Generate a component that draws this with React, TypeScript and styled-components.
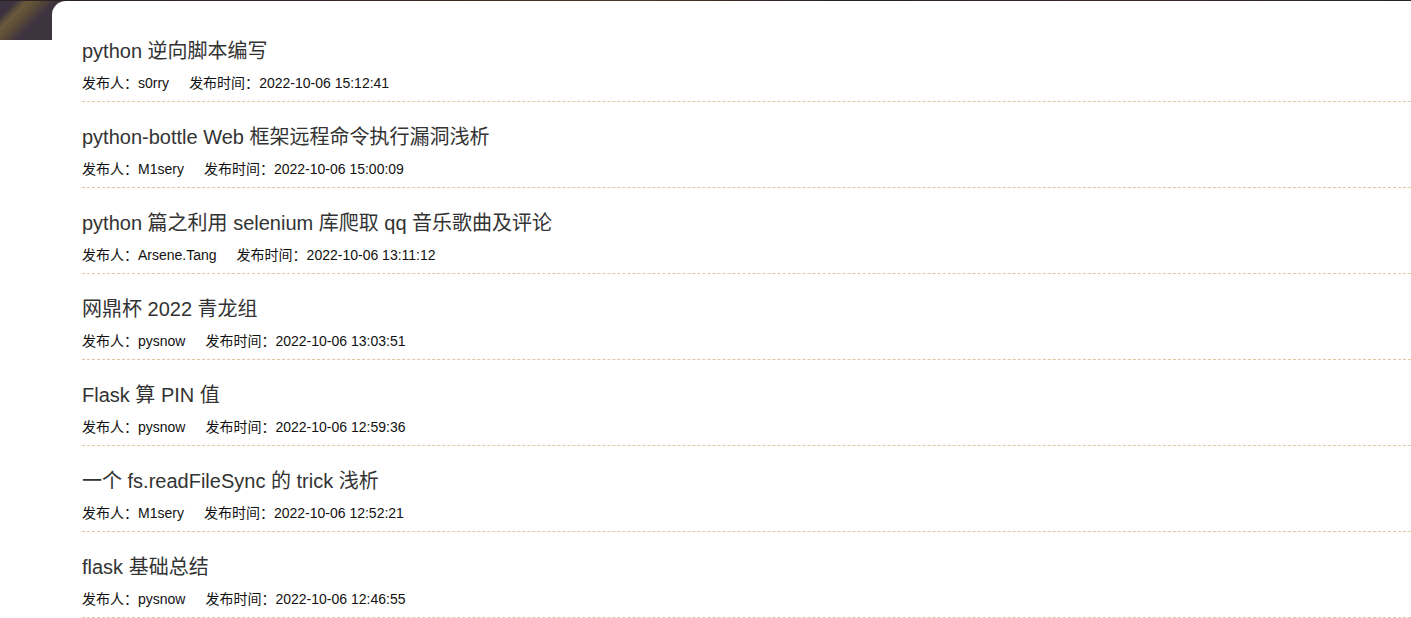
import styled, { createGlobalStyle } from "styled-components";

interface Post {
  title: string;
  author: string;
  time: string;
}

const posts: Post[] = [
  { title: "python 逆向脚本编写", author: "s0rry", time: "2022-10-06 15:12:41" },
  {
    title: "python-bottle Web 框架远程命令执行漏洞浅析",
    author: "M1sery",
    time: "2022-10-06 15:00:09",
  },
  {
    title: "python 篇之利用 selenium 库爬取 qq 音乐歌曲及评论",
    author: "Arsene.Tang",
    time: "2022-10-06 13:11:12",
  },
  { title: "网鼎杯 2022 青龙组", author: "pysnow", time: "2022-10-06 13:03:51" },
  { title: "Flask 算 PIN 值", author: "pysnow", time: "2022-10-06 12:59:36" },
  {
    title: "一个 fs.readFileSync 的 trick 浅析",
    author: "M1sery",
    time: "2022-10-06 12:52:21",
  },
  { title: "flask 基础总结", author: "pysnow", time: "2022-10-06 12:46:55" },
];

const GlobalStyle = createGlobalStyle`
  html, body {
    margin: 0;
    padding: 0;
    overflow: hidden;
  }
  body {
    font-family: "Liberation Sans", "Noto Sans CJK SC", sans-serif;
    background:
      linear-gradient(90deg, #2b2124 0%, #3a2a22 30%, #4a3826 45%, #2a2023 60%, #3b2b24 80%, #2a2226 100%) top / 100% 1px no-repeat,
      linear-gradient(135deg, #3b3240 0px, #3d3340 12px, #6b5a3a 20px, #5c4d35 28px, #3e3440 40px, #3a3140 100%) 0 0 / 100% 40px no-repeat,
      #fff;
  }
`;

const _Page = styled.div`
  padding: 1px 0 0 52px;
`;

const _Card = styled.div`
  background: #fff;
  border-top-left-radius: 14px;
  padding: 15px 0 0 30px;
`;

const _List = styled.ul`
  list-style: none;
  margin: 0;
  padding: 0;
`;

const _Item = styled.li`
  padding: 20px 0 8px;
  border-bottom: 1px dashed #e0c7a4;
`;

const _Title = styled.a`
  display: block;
  font-size: 20px;
  line-height: 30px;
  color: #333;
  text-decoration: none;
  margin-bottom: 7px;
`;

const _Meta = styled.div`
  display: flex;
  align-items: baseline;
  font-size: 14px;
  line-height: 20px;
  color: #111;
`;

const _Field = styled.span`
  margin-right: 20px;
`;

export default function App() {
  return (
    <>
      <GlobalStyle />
      <_Page>
        <_Card>
          <_List>
            {posts.map((p) => (
              <_Item key={p.title}>
                <_Title href="#">{p.title}</_Title>
                <_Meta>
                  <_Field>发布人：{p.author}</_Field>
                  <_Field>发布时间：{p.time}</_Field>
                </_Meta>
              </_Item>
            ))}
          </_List>
        </_Card>
      </_Page>
    </>
  );
}
